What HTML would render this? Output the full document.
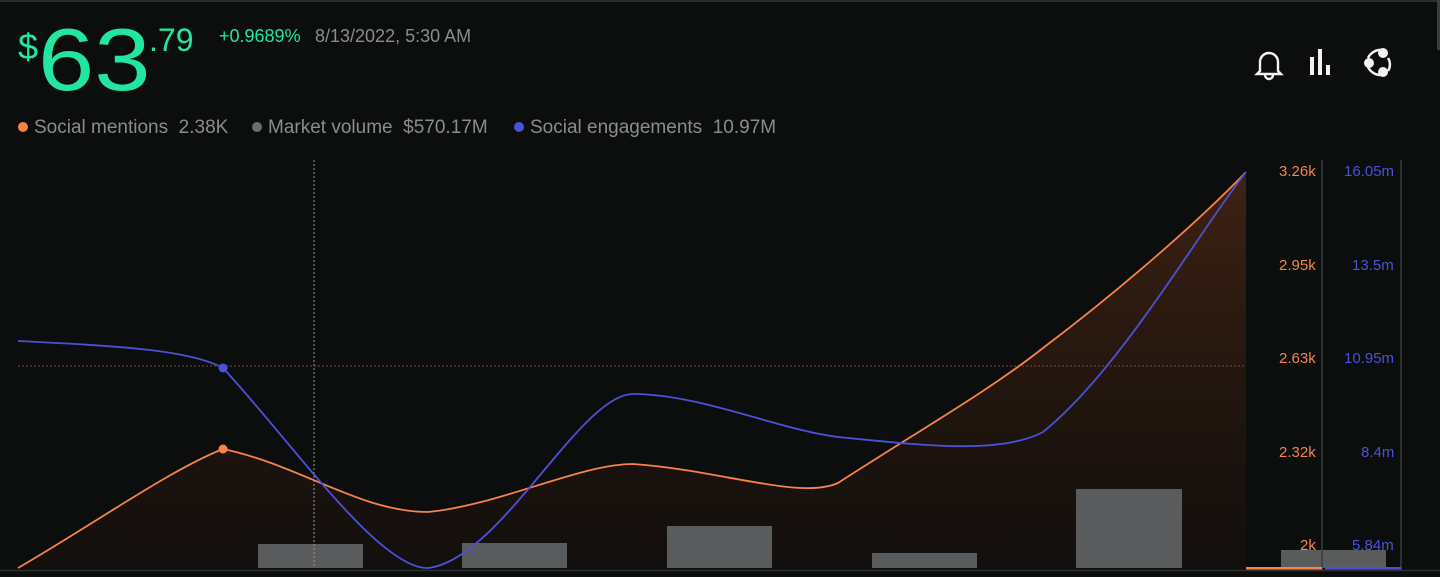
<!DOCTYPE html>
<html><head><meta charset="utf-8"><style>
html,body{margin:0;padding:0;background:#0c0d0d;width:1440px;height:577px;overflow:hidden;font-family:"Liberation Sans",sans-serif}
.top{position:absolute;left:0;top:0;width:1440px;height:2px;background:#2a2c2e}
.rb{position:absolute;left:1437px;top:0;width:3px;height:50px;background:#3a3c3e}
.price{position:absolute;left:18px;top:14px;color:#22e5a0}
.price .d{position:absolute;left:0;top:12px;font-size:36px}
.price .m{position:absolute;left:20px;top:2px;font-size:88px;line-height:88px;transform:scaleX(1.15);transform-origin:left top}
.price .c{position:absolute;left:131px;top:8px;font-size:32px}
.chg{position:absolute;left:219px;top:26px;font-size:18px;color:#22e5a0}
.dt{position:absolute;left:315px;top:26px;font-size:18px;color:#8a8c8e}
.leg{position:absolute;top:117px;font-size:19px;color:#8a8c8e;white-space:nowrap}
.dot{display:inline-block;width:10px;height:10px;border-radius:50%;margin-right:6px;vertical-align:1px}
.ax{position:absolute;font-size:15px}
</style></head><body>
<div class="top"></div><div class="rb"></div>
<div class="price"><span class="d">$</span><span class="m">63</span><span class="c">.79</span></div>
<div class="chg">+0.9689%</div>
<div class="dt">8/13/2022, 5:30 AM</div>
<div class="leg" style="left:18px"><span class="dot" style="background:#f5834a"></span>Social mentions&nbsp;&nbsp;2.38K</div>
<div class="leg" style="left:252px"><span class="dot" style="background:#6b6d6f"></span>Market volume&nbsp;&nbsp;$570.17M</div>
<div class="leg" style="left:514px"><span class="dot" style="background:#4b52d8"></span>Social engagements&nbsp;&nbsp;10.97M</div>

<svg style="position:absolute;left:0;top:0" width="1440" height="577">
<g fill="none" stroke="#f2f2f2" stroke-width="2.4">
<path d="M1260 71v-9a9 9 0 0 1 18 0v9l3 3h-24z M1265 75a4 4 0 0 0 8 0"/>
</g>
<g fill="#f2f2f2"><rect x="1310" y="57" width="4" height="18"/><rect x="1318" y="49" width="4" height="26"/><rect x="1326" y="65" width="4" height="10"/></g>
<g fill="none" stroke="#f2f2f2" stroke-width="2.5"><path d="M1368 58a14 14 0 0 1 14-8M1388 58a12 12 0 0 1 0 13M1381 75a14 14 0 0 1-13-8"/></g>
<g fill="#f2f2f2"><circle cx="1369" cy="63" r="5"/><circle cx="1383" cy="53" r="5"/><circle cx="1383" cy="72" r="5"/></g>
<defs><linearGradient id="g" x1="0" y1="0" x2="0" y2="1"><stop offset="0" stop-color="#6a3418" stop-opacity=".55"/><stop offset="1" stop-color="#3a1c0e" stop-opacity=".15"/></linearGradient></defs>
<path d="M18 568 C100 520 170 470 223 449 C300 465 360 512 428 512 C500 505 580 464 633 464 C720 470 800 500 838 483 C920 430 990 390 1043 348 C1120 290 1200 220 1246 172 L1246 568 Z" fill="url(#g)"/>
<g fill="#5a5b5c"><rect x="258" y="544" width="105" height="24"/><rect x="462" y="543" width="105" height="25"/><rect x="667" y="526" width="105" height="42"/><rect x="872" y="553" width="105" height="15"/><rect x="1076" y="489" width="106" height="79"/><rect x="1281" y="550" width="105" height="18"/></g>
<line x1="314" y1="160" x2="314" y2="568" stroke="#9a9a9a" stroke-width="1" stroke-dasharray="2 2"/>
<line x1="18" y1="366" x2="1246" y2="366" stroke="#7a4a3a" stroke-width="1" stroke-dasharray="2 2"/>
<line x1="1322" y1="160" x2="1322" y2="570" stroke="#3a3c3e" stroke-width="1.5"/>
<line x1="1401" y1="160" x2="1401" y2="570" stroke="#3a3c3e" stroke-width="1.5"/>
<line x1="0" y1="570.5" x2="1440" y2="570.5" stroke="#2e3032" stroke-width="1.5"/>
<path d="M18 568 C100 520 170 470 223 449 C300 465 360 512 428 512 C500 505 580 464 633 464 C720 470 800 500 838 483 C920 430 990 390 1043 348 C1120 290 1200 220 1246 172" fill="none" stroke="#f5834a" stroke-width="1.8"/>
<path d="M18 341 C120 346 190 350 223 368 C290 440 380 570 428 568 C500 560 580 394 633 394 C700 394 780 430 838 437 C920 445 1000 455 1043 432 C1120 370 1200 230 1246 172" fill="none" stroke="#4b52d8" stroke-width="1.8"/>
<circle cx="223" cy="449" r="4.5" fill="#f5834a"/><circle cx="223" cy="368" r="4.5" fill="#4b52d8"/>
<rect x="1246" y="567" width="76" height="2.5" fill="#f5834a"/><rect x="1325" y="567" width="76" height="2.5" fill="#4b52d8"/>
</svg>
<div class="ax" style="left:1279px;top:163px;color:#f5834a">3.26k</div>
<div class="ax" style="left:1279px;top:257px;color:#f5834a">2.95k</div>
<div class="ax" style="left:1279px;top:350px;color:#f5834a">2.63k</div>
<div class="ax" style="left:1279px;top:444px;color:#f5834a">2.32k</div>
<div class="ax" style="left:1300px;top:537px;color:#f5834a">2k</div>
<div class="ax" style="left:1344px;top:163px;color:#4b52d8">16.05m</div>
<div class="ax" style="left:1352px;top:257px;color:#4b52d8">13.5m</div>
<div class="ax" style="left:1344px;top:350px;color:#4b52d8">10.95m</div>
<div class="ax" style="left:1361px;top:444px;color:#4b52d8">8.4m</div>
<div class="ax" style="left:1352px;top:537px;color:#4b52d8">5.84m</div>
</body></html>
